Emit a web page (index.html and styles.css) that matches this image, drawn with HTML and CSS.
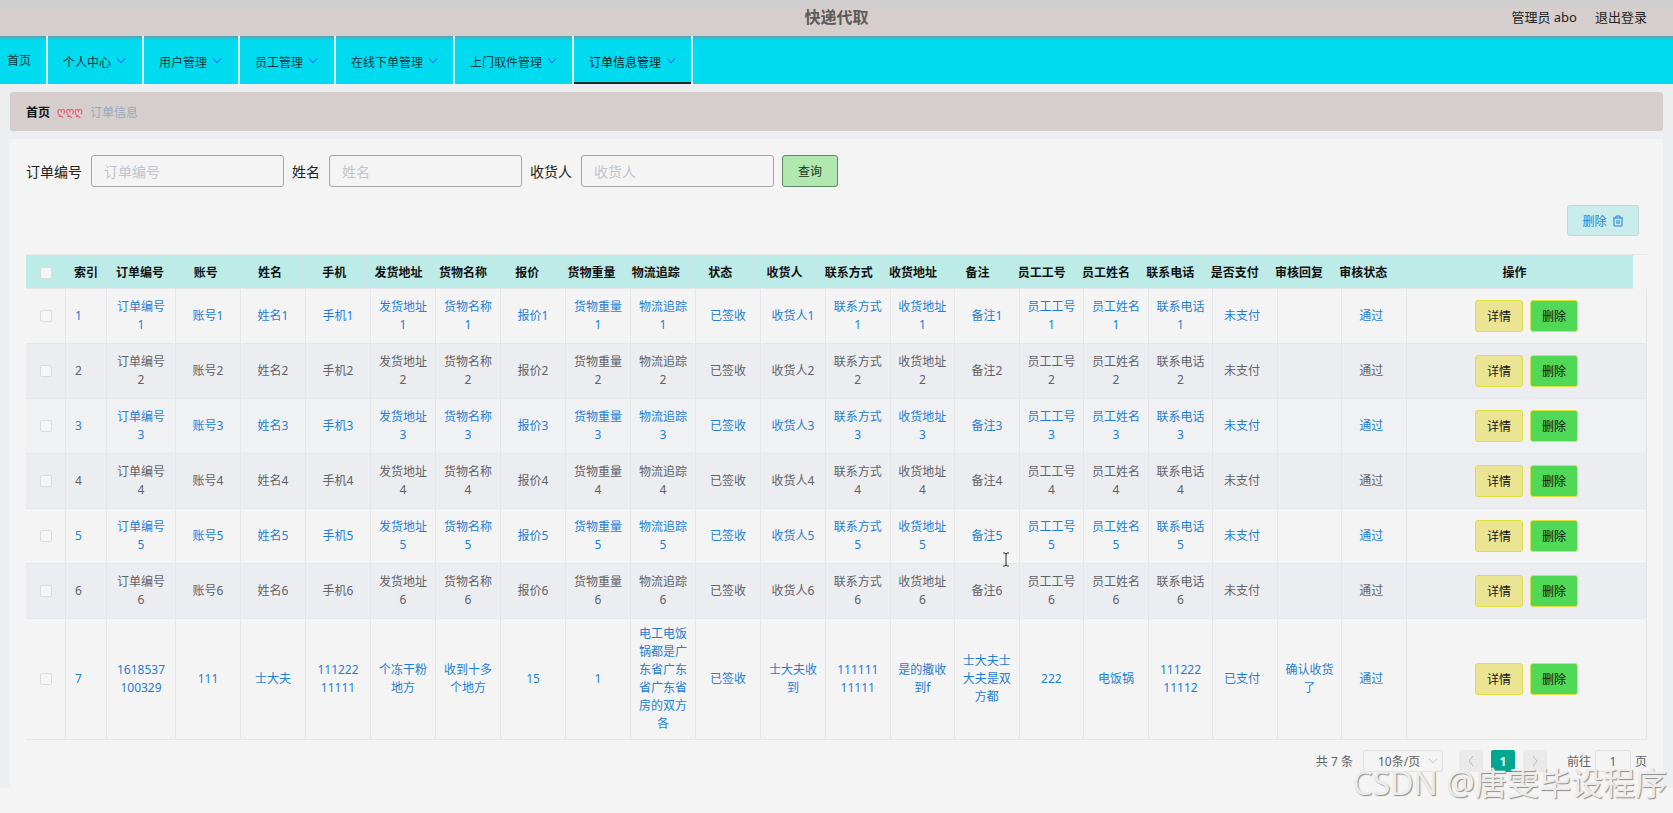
FILE: index.html
```html
<!DOCTYPE html>
<html lang="zh-CN">
<head>
    <meta charset="UTF-8">
    <meta name="viewport" content="width=device-width, initial-scale=1.0">
    <title>快递代取</title>
    <link rel="stylesheet" href="styles.css">
</head>
<body>
    <header class="header">
        <h1 class="title">快递代取</h1>
        <div class="user-box">
            <span>管理员 abo</span>
            <a href="#">退出登录</a>
        </div>
    </header>

    <nav class="nav">
        <a class="nav-item home" href="#">首页</a>
        <a class="nav-item" href="#">个人中心<svg class="arrow" viewBox="0 0 12 12"><path d="M2 3l4 5 4-5"/></svg></a>
        <a class="nav-item" href="#">用户管理<svg class="arrow" viewBox="0 0 12 12"><path d="M2 3l4 5 4-5"/></svg></a>
        <a class="nav-item" href="#">员工管理<svg class="arrow" viewBox="0 0 12 12"><path d="M2 3l4 5 4-5"/></svg></a>
        <a class="nav-item" href="#">在线下单管理<svg class="arrow" viewBox="0 0 12 12"><path d="M2 3l4 5 4-5"/></svg></a>
        <a class="nav-item" href="#">上门取件管理<svg class="arrow" viewBox="0 0 12 12"><path d="M2 3l4 5 4-5"/></svg></a>
        <a class="nav-item active" href="#">订单信息管理<svg class="arrow" viewBox="0 0 12 12"><path d="M2 3l4 5 4-5"/></svg></a>
    </nav>

    <main class="main">
        <div class="breadcrumb">
            <a href="#">首页</a>
            <span class="separator">ღღღ</span>
            <span class="current">订单信息</span>
        </div>

        <section class="content">
            <form class="search-form" onsubmit="return false">
                <div class="form-item">
                    <label for="orderNo">订单编号</label>
                    <input type="text" id="orderNo" placeholder="订单编号">
                </div>
                <div class="form-item">
                    <label for="userName">姓名</label>
                    <input type="text" id="userName" placeholder="姓名">
                </div>
                <div class="form-item">
                    <label for="receiver">收货人</label>
                    <input type="text" id="receiver" placeholder="收货人">
                </div>
                <button class="search-btn" type="submit">查询</button>
            </form>

            <div class="toolbar">
                <button class="batch-btn" type="button">删除
                    <svg class="trash" viewBox="0 0 12 12"><path d="M1 3h10M4 3V1h4v2M2 3v8h8V3M5 5v4M7 5v4"/></svg>
                </button>
            </div>

            <div class="table-box">
                <table class="table head-table">
                    <colgroup>
                        <col class="col-check"><col class="col-index"><col class="col-order">
                        <col span="19">
                        <col class="col-action">
                    </colgroup>
                    <thead><tr id="headRow"></tr></thead>
                </table>
                <table class="table body-table">
                    <colgroup>
                        <col class="col-check"><col class="col-index"><col class="col-order">
                        <col class="col-wide" span="10"><col span="9">
                        <col class="col-action">
                    </colgroup>
                    <tbody id="bodyRows"></tbody>
                </table>
            </div>

            <div class="pagination">
                <span>共 7 条</span>
                <div class="size-box">
                    <select aria-label="每页条数">
                        <option>10条/页</option>
                        <option>20条/页</option>
                    </select>
                    <svg class="size-arrow" viewBox="0 0 12 12"><path d="M2 4l4 4 4-4"/></svg>
                </div>
                <div class="pager">
                    <button type="button" aria-label="上一页" disabled><svg viewBox="0 0 12 12"><path d="M8 1L4 6l4 5"/></svg></button>
                    <button type="button" class="on">1</button>
                    <button type="button" aria-label="下一页" disabled><svg viewBox="0 0 12 12"><path d="M4 1l4 5-4 5"/></svg></button>
                </div>
                <div class="jump">
                    <label for="jumpPage">前往</label>
                    <input type="text" id="jumpPage" value="1">
                    <span>页</span>
                </div>
            </div>
        </section>
    </main>

    <svg class="cursor" viewBox="0 0 8 15"><path d="M1 1h2l1 1 1-1h2M4 2v11M1 14h2l1-1 1 1h2"/></svg>
    <div class="watermark">CSDN @唐雯毕设程序</div>

    <script src="script.js"></script>
</body>
</html>
```
FILE: styles.css
```css
* {
    box-sizing: border-box;
}

body {
    margin: 0;
    min-height: 100vh;
    background-color: #f4f4f4;
    color: #606266;
    font-family: "Noto Sans", "Noto Sans CJK SC", sans-serif;
    font-size: 12px;
}

a {
    color: inherit;
    text-decoration: none;
}

button,
input,
select {
    font-family: inherit;
    font-size: 12px;
}

svg {
    fill: none;
    stroke: currentColor;
}

/* header */
.header {
    display: grid;
    grid-template-columns: 1fr auto 1fr;
    align-items: center;
    height: 36px;
    padding: 0 26px 3px;
    background: linear-gradient(#d0cfd0, #d0cfd0 5px, #d6cecc 8px);
}

.title {
    grid-column: 2;
    margin: 0;
    font-size: 16px;
    line-height: 24px;
    color: #5c5a5a;
}

.user-box {
    display: flex;
    justify-content: flex-end;
    gap: 18px;
    font-size: 13px;
    line-height: 18px;
    color: #222;
}

/* nav */
.nav {
    display: flex;
    height: 48px;
    background: linear-gradient(#5f9fa8, #00dbef 4px);
}

.nav-item {
    display: flex;
    align-items: center;
    gap: 4px;
    min-width: 96px;
    padding: 3px 14px 0 15px;
    border-right: 2px solid #d5f3f6;
    color: #10383d;
}

.nav-item.home {
    min-width: 0;
    padding: 0 15px 0 7px;
}

.nav-item.active {
    color: #06181a;
    box-shadow: inset 0 -2px #12272b;
}

.arrow {
    width: 12px;
    height: 12px;
    margin-top: -2px;
    stroke: #1b5cf5;
}

/* main */
.main {
    padding: 8px 10px 0;
    background-color: #eceef0;
}

.breadcrumb {
    display: flex;
    align-items: center;
    gap: 7px;
    height: 39px;
    margin-bottom: 8px;
    padding: 0 16px;
    border-radius: 3px;
    background-color: #d6cecc;
}

.breadcrumb a {
    font-weight: bold;
    color: #111;
}

.separator {
    color: #f0476a;
    font-family: "DejaVu Sans", sans-serif;
    font-size: 11px;
}

.current {
    color: #97a8be;
}

.content {
    padding: 16px;
    background-color: #f4f4f4;
}

/* search */
.search-form {
    display: flex;
    gap: 8px;
}

.form-item {
    display: flex;
    align-items: center;
    gap: 9px;
    font-size: 14px;
    color: #222;
}

.form-item input {
    width: 193px;
    height: 32px;
    padding: 0 12px;
    border: 1px solid #a6a6a6;
    border-radius: 3px;
    background-color: #f4f4f4;
    font-size: 14px;
}

.form-item input::placeholder {
    color: #c0c4cc;
}

.search-btn {
    width: 56px;
    height: 32px;
    padding: 0;
    border: 1px solid #5f8a68;
    border-radius: 3px;
    background-color: #b0e8b0;
    color: #1f3325;
}

.toolbar {
    display: flex;
    justify-content: flex-end;
    margin: 18px 0;
    padding-right: 8px;
}

.batch-btn {
    display: flex;
    align-items: center;
    justify-content: center;
    gap: 5px;
    width: 72px;
    height: 31px;
    padding: 0;
    border: 1px solid #c5d5dd;
    border-radius: 3px;
    background-color: #caeceb;
    color: #1c82e6;
}

.trash {
    width: 12px;
    height: 12px;
}

/* table */
.table-box {
    border-top: 1px solid #e6eaec;
}

.table {
    width: 100%;
    table-layout: fixed;
    border-collapse: separate;
    border-spacing: 0;
}

.head-table {
    width: calc(100% - 14px);
    background-color: #bdebe7;
}

.col-check {
    width: 40px;
}

.col-index {
    width: 41px;
}

.col-order {
    width: 69px;
}

.col-wide {
    width: 65px;
}

.col-action {
    width: 240px;
}

.head-table .col-order {
    width: 67px;
}

.head-table .col-action {
    width: 237px;
}

.table th,
.table td {
    padding: 6px 7px;
    border-right: 1px solid #e4e6ea;
    border-bottom: 1px solid #e4e6ea;
    text-align: center;
    line-height: 18px;
}

.table th {
    height: 34px;
    padding: 2px 0 0;
    border-right-color: #c6e9e7;
    color: #111;
}

.table th:last-child {
    border-right: none;
}

.table td {
    height: 55px;
}

.body-table tr {
    color: #1f7ed6;
}

.body-table tr:nth-child(even) {
    background-color: #ecedf1;
    color: #606266;
}

.body-table tr:nth-child(3) {
    background-color: #f0f1f3;
}

.table td.index {
    padding-left: 9px;
    text-align: left;
}

.table td.state {
    padding-right: 13px;
}

.table input {
    display: block;
    width: 12px;
    height: 12px;
    margin: 0 auto;
    appearance: none;
    border: 1px solid #d8dbe0;
    border-radius: 2px;
    background-color: #f6f6f6;
}

.actions {
    display: flex;
    justify-content: center;
    gap: 7px;
}

.actions button {
    width: 48px;
    height: 32px;
    padding: 0;
    border: 1px solid #dfe03c;
    border-radius: 3px;
    color: #111;
}

.detail-btn {
    background-color: #ebe493;
}

.delete-btn {
    background-color: #50d857;
}

/* pagination */
.pagination {
    display: flex;
    justify-content: flex-end;
    align-items: center;
    margin-top: 10px;
}

.size-box {
    position: relative;
    margin: 0 16px 0 10px;
}

.size-box select {
    width: 80px;
    height: 22px;
    padding: 0 12px 0 14px;
    appearance: none;
    border: 1px solid #dcdfe3;
    border-radius: 3px;
    background-color: #f4f4f4;
    color: #606266;
}

.size-arrow {
    position: absolute;
    top: 5px;
    right: 4px;
    width: 12px;
    height: 12px;
    color: #c0c4cc;
    pointer-events: none;
}

.pager {
    display: flex;
    gap: 8px;
}

.pager button {
    display: flex;
    align-items: center;
    justify-content: center;
    width: 24px;
    height: 22px;
    padding: 0;
    border: none;
    border-radius: 2px;
    background-color: #eaeaeb;
    color: #b4b8bf;
}

.pager button.on {
    background-color: #00a78e;
    color: #fff;
    font-weight: bold;
}

.pager svg {
    width: 12px;
    height: 12px;
}

.jump {
    display: flex;
    align-items: center;
    gap: 4px;
    margin-left: 20px;
}

.jump input {
    width: 36px;
    height: 22px;
    padding: 0;
    border: 1px solid #dcdfe3;
    border-radius: 3px;
    background-color: #f4f4f4;
    color: #606266;
    text-align: center;
}

.cursor {
    position: absolute;
    left: 1002px;
    top: 552px;
    width: 8px;
    height: 15px;
    color: #333;
}

.watermark {
    position: absolute;
    right: 6px;
    bottom: 7px;
    font-size: 32px;
    line-height: 46px;
    color: #ececec;
    text-shadow: 1px 1px 1px #8c8c8c;
    pointer-events: none;
}
```
FILE: script.js
```js
const columns = ['索引', '订单编号', '账号', '姓名', '手机', '发货地址', '货物名称', '报价', '货物重量', '物流追踪', '状态', '收货人',
    '联系方式', '收货地址', '备注', '员工工号', '员工姓名', '联系电话', '是否支付', '审核回复', '审核状态', '操作'];

const fixedValues = {
    '状态': '已签收',
    '是否支付': '未支付',
    '审核回复': '',
    '审核状态': '通过'
};

const rows = [];

for (let i = 1; i <= 6; i++) {
    rows.push(columns.slice(1, -1).map(name => name in fixedValues ? fixedValues[name] : name + i));
}

rows.push(['1618537<wbr>100329', '111', '士大夫', '111222<wbr>11111', '个冻干粉地方', '收到十多个地方', '15', '1',
    '电工电饭锅都是广东省广东省广东省房的双方各', '已签收', '士大夫收到', '111111<wbr>11111', '是的撒收到f', '士大夫士大夫是双方都',
    '222', '电饭锅', '111222<wbr>11112', '已支付', '确认收货了', '通过']);

document.getElementById('headRow').innerHTML =
    '<th><input type="checkbox" aria-label="全选"></th>' + columns.map(name => `<th>${name}</th>`).join('');

document.getElementById('bodyRows').innerHTML = rows.map((row, i) => {
    const cells = row.map((value, n) => {
        const name = columns[n + 1];
        const isState = name === '是否支付' || name === '审核状态';
        return `<td${isState ? ' class="state"' : ''}>${value}</td>`;
    }).join('');

    return `<tr>
        <td><input type="checkbox" aria-label="选择第${i + 1}行"></td>
        <td class="index">${i + 1}</td>
        ${cells}
        <td>
            <div class="actions">
                <button type="button" class="detail-btn">详情</button>
                <button type="button" class="delete-btn">删除</button>
            </div>
        </td>
    </tr>`;
}).join('');
```
